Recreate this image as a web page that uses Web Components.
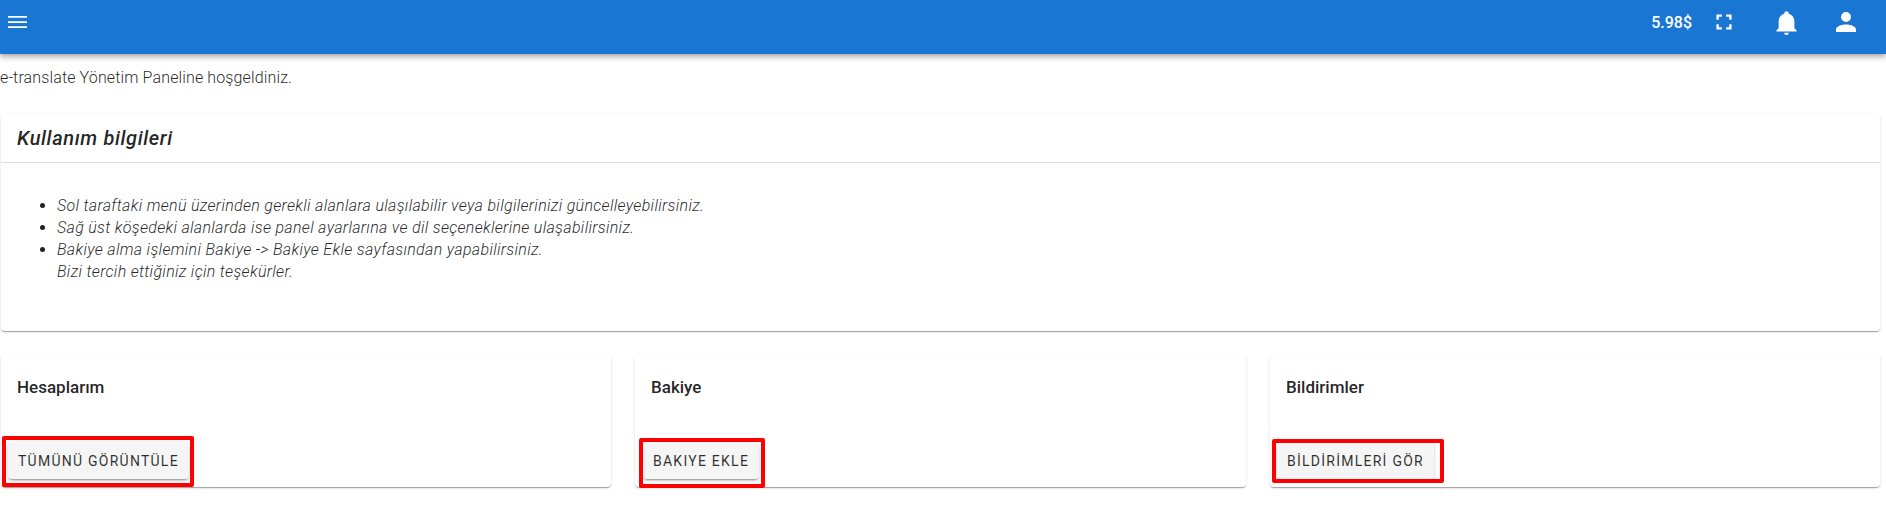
<!DOCTYPE html>
<html lang="tr">
<head>
<meta charset="utf-8">
<title>e-translate</title>
<style>
    html, body { margin: 0; background: #fff; }
    body {
        font-family: Roboto, "Liberation Sans", sans-serif;
        color: rgba(0, 0, 0, .87);
        height: 527px;
        overflow: hidden;
    }
</style>
</head>
<body>

<template id="app-bar">
    <style>
        :host {
            display: flex;
            align-items: center;
            height: 54px;
            background: #1976d2;
            color: #fff;
            box-shadow: 0 2px 4px -1px rgba(0,0,0,.2), 0 4px 5px 0 rgba(0,0,0,.14), 0 1px 10px 0 rgba(0,0,0,.12);
            position: relative;
            padding: 0 25px 10px 8px;
            box-sizing: border-box;
        }
        .menu { width: 19px; height: 12px; display: block; }
        .spacer { flex: 1; }
        .balance { font-size: 16px; font-weight: 500; margin-right: 19px; }
        .icons { display: flex; align-items: center; }
        svg { fill: #fff; display: block; }
    </style>
    <svg class="menu" viewBox="0 0 19 12"><path d="M0 0h19v1.700H0zM0 5.200h19v1.700H0zM0 10.300h19v1.700H0z"/></svg>
    <div class="spacer"></div>
    <span class="balance">5.98$</span>
    <div class="icons">
        <svg width="26" height="26" viewBox="0 0 24 24" style="margin-right:36px"><path d="M5 5h5v2.200H7.200V10H5zM14 5h5v5h-2.200V7.200H14zM5 14h2.200v2.800H10V19H5zM16.800 14H19v5h-5v-2.200h2.800z"/></svg>
        <svg width="27" height="27" viewBox="0 0 24 24" style="margin-right:31px"><path d="M21 19v1H3v-1l2-2v-6c0-3.100 2-5.800 5-6.700V4a2 2 0 0 1 4 0v.3c3 .9 5 3.600 5 6.700v6zm-7 2a2 2 0 0 1-4 0"/></svg>
        <svg width="30" height="30" viewBox="0 0 24 24"><path d="M12 4a4 4 0 0 1 4 4 4 4 0 0 1-4 4 4 4 0 0 1-4-4 4 4 0 0 1 4-4m0 10c4.400 0 8 1.800 8 4v2H4v-2c0-2.200 3.600-4 8-4z"/></svg>
    </div>
</template>

<template id="info-card">
    <style>
        :host {
            display: block;
            background: #fff;
            border-radius: 4px;
            box-shadow: 0 2px 1px -1px rgba(0,0,0,.2), 0 1px 1px 0 rgba(0,0,0,.14), 0 1px 3px 0 rgba(0,0,0,.12);
            height: 217px;
        }
        header {
            font-size: 20px;
            font-weight: 500;
            font-style: italic;
            letter-spacing: .62px;
            line-height: 48px;
            padding-left: 16px;
            border-bottom: 1px solid #e0e0e0;
            height: 48px;
        }
        .body {
            font-size: 16px;
            font-weight: 300;
            font-style: italic;
            letter-spacing: .315px;
            line-height: 22px;
            padding: 32px 17px 0 56px;
        }
    </style>
    <header><slot name="title"></slot></header>
    <div class="body"><slot></slot></div>
</template>

<template id="bullet-item">
    <style>
        :host { display: list-item; list-style: disc; }
    </style>
    <slot></slot>
</template>

<template id="action-card">
    <style>
        :host {
            display: block;
            background: #fff;
            border-radius: 4px;
            box-shadow: 0 2px 1px -1px rgba(0,0,0,.2), 0 1px 1px 0 rgba(0,0,0,.14), 0 1px 3px 0 rgba(0,0,0,.12);
            height: 132px;
            position: relative;
        }
        .title {
            font-size: 17px;
            font-weight: 500;
            line-height: 24px;
            padding: 20px 16px 0 16px;
            height: 67px;
        }
        .actions { padding-left: var(--btn-left, 7px); display: flex; }
    </style>
    <div class="title"><slot name="title"></slot></div>
    <div class="actions"><slot></slot></div>
</template>

<template id="flat-button">
    <style>
        :host { display: inline-block; position: relative; }
        button {
            display: block;
            font: 400 14px Roboto, "Liberation Sans", sans-serif;
            letter-spacing: 1.25px;
            color: rgba(0, 0, 0, .82);
            background: #f5f5f5;
            border: 0;
            border-radius: 4px;
            height: 37px;
            padding: 0 10px;
            box-shadow: 0 3px 1px -2px rgba(0,0,0,.2), 0 2px 2px 0 rgba(0,0,0,.14), 0 1px 5px 0 rgba(0,0,0,.12);
        }
        /* the red marker drawn over the screenshot */
        .mark {
            position: absolute;
            top: var(--mark-top, -6px);
            left: var(--mark-left, -6px);
            right: var(--mark-right, -5px);
            bottom: var(--mark-bottom, -8px);
            border: 4px solid #f00;
            border-radius: 2px;
            pointer-events: none;
        }
    </style>
    <button><slot></slot></button>
    <div class="mark"></div>
</template>

<app-bar></app-bar>
<page-content>
    <p slot="welcome">e-translate Yönetim Paneline hoşgeldiniz.</p>
    <info-card slot="usage">
        <span slot="title">Kullanım bilgileri</span>
        <bullet-item>Sol taraftaki menü üzerinden gerekli alanlara ulaşılabilir veya bilgilerinizi güncelleyebilirsiniz.</bullet-item>
        <bullet-item>Sağ üst köşedeki alanlarda ise panel ayarlarına ve dil seçeneklerine ulaşabilirsiniz.</bullet-item>
        <bullet-item>Bakiye alma işlemini Bakiye -&gt; Bakiye Ekle sayfasından yapabilirsiniz.<br>Bizi tercih ettiğiniz için teşekürler.</bullet-item>
    </info-card>
    <action-card slot="actions" style="--btn-left:7px">
        <span slot="title">Hesaplarım</span>
        <flat-button>TÜMÜNÜ GÖRÜNTÜLE</flat-button>
    </action-card>
    <action-card slot="actions" style="--btn-left:8px">
        <span slot="title">Bakiye</span>
        <flat-button style="--mark-top:-4px;--mark-left:-4px;--mark-right:-6px;--mark-bottom:-9px">BAKIYE EKLE</flat-button>
    </action-card>
    <action-card slot="actions" style="--btn-left:7px">
        <span slot="title">Bildirimler</span>
        <flat-button style="--mark-top:-3px;--mark-left:-5px;--mark-right:-10px;--mark-bottom:-4px">BİLDİRİMLERİ GÖR</flat-button>
    </action-card>
</page-content>

<template id="page-content">
    <style>
        :host { display: block; padding: 0 6px 0 1px; }
        .welcome { height: 60px; }
        ::slotted(p) {
            margin: 0 0 0 -1px;
            padding-top: 15px;
            font-size: 16px;
            font-weight: 300;
            letter-spacing: .13px;
            line-height: 18px;
        }
        .cards {
            display: grid;
            grid-template-columns: 610px 611px 610px;
            gap: 24px;
            margin-top: 24px;
        }
    </style>
    <div class="welcome"><slot name="welcome"></slot></div>
    <slot name="usage"></slot>
    <div class="cards"><slot name="actions"></slot></div>
</template>

<script type="text/javascript">
    // every element just clones the template that has its own tag name
    class TemplatedElement extends HTMLElement {
        constructor() {
            super();
            let shadow = this.attachShadow({mode: 'open'});
            let template = document.getElementById(this.localName);
            shadow.appendChild(template.content.cloneNode(true));
        }
    }

    ['app-bar', 'info-card', 'bullet-item', 'action-card', 'flat-button', 'page-content'].forEach((name) => {
        customElements.define(name, class extends TemplatedElement {});
    });
</script>
</body>
</html>
